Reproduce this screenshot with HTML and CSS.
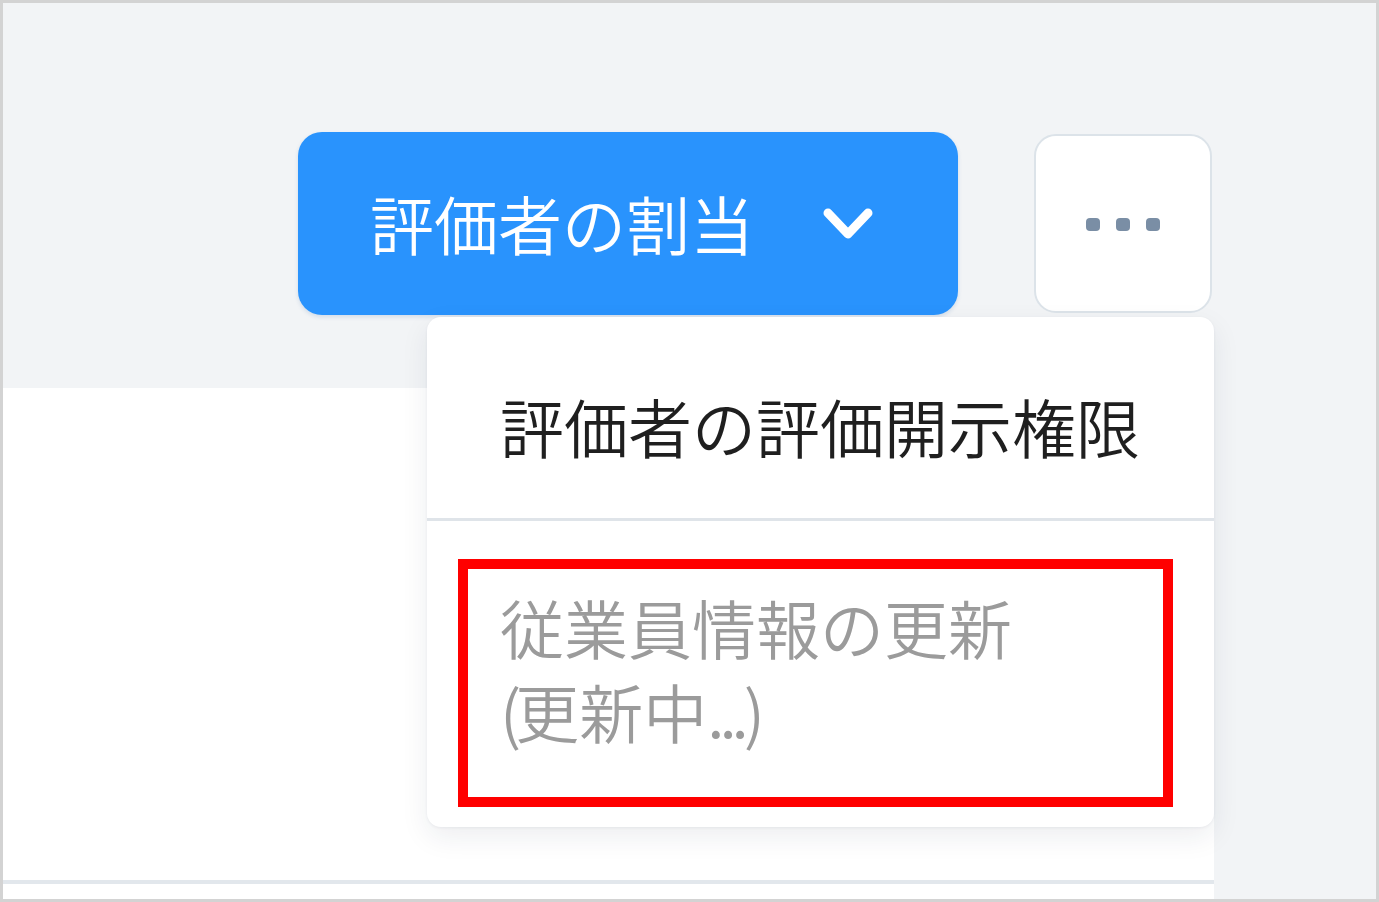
FILE: index.html
```html
<!DOCTYPE html>
<html lang="ja">
<head>
    <meta charset="UTF-8">
    <meta name="viewport" content="width=device-width, initial-scale=1.0">
    <title>評価者の割当</title>
    <link rel="stylesheet" href="styles.css">
</head>
<body>

    <div class="frame">
        <div class="page">
            <div class="toolbar">
                <div class="actions">
                    <button class="assign-btn">
                        <span>評価者の割当</span>
                        <svg class="chevron" width="52" height="32" viewBox="0 0 52 32">
                            <polyline points="6,6 26,27 46,6" fill="none" stroke="#fff" stroke-width="9" stroke-linecap="round" stroke-linejoin="round"/>
                        </svg>
                    </button>
                    <button class="more-btn">
                        <span class="dot"></span>
                        <span class="dot"></span>
                        <span class="dot"></span>
                    </button>

                    <div class="dropdown">
                        <div class="menu-item">評価者の評価開示権限</div>
                        <div class="menu-item disabled">
                            <div class="highlight">従業員情報の更新<br><span class="paren">(</span>更新中<span class="ellipsis">...)</span></div>
                        </div>
                    </div>
                </div>
            </div>

            <div class="panel">
                <div class="panel-body"></div>
                <div class="panel-footer"></div>
            </div>
        </div>
        <div class="side"></div>
    </div>

</body>
</html>
```

FILE: styles.css
```css
* {
    box-sizing: border-box;
}

body {
    margin: 0;
    font-family: "Noto Sans CJK JP", "Noto Sans", sans-serif;
}

.frame {
    width: 1379px;
    height: 902px;
    border: 3px solid #d3d3d3;
    background: #f2f4f6;
    display: flex;
}

.page {
    width: 1211px;
    display: flex;
    flex-direction: column;
}

.side {
    flex: 1;
}

.toolbar {
    height: 385px;
    padding-top: 129px;
    display: flex;
    justify-content: flex-end;
    padding-right: 2px;
}

.actions {
    position: relative;
    display: flex;
    align-items: flex-start;
    gap: 76px;
    height: 183px;
}

.assign-btn {
    height: 183px;
    padding: 0 84px 0 72px;
    border: none;
    border-radius: 24px;
    background: #2993fd;
    color: white;
    font-family: inherit;
    font-size: 64px;
    font-weight: 350;
    display: flex;
    align-items: center;
    gap: 68px;
    box-shadow: 0 2px 4px rgba(30, 90, 160, 0.15);
    cursor: pointer;
}

.assign-btn span {
    line-height: 1;
    margin-top: -3px;
}

.chevron {
    display: block;
    margin-top: -2px;
}

.more-btn {
    width: 178px;
    height: 179px;
    margin-top: 2px;
    background: white;
    border: 2px solid #dce3e9;
    border-radius: 22px;
    display: flex;
    justify-content: center;
    align-items: center;
    gap: 16px;
    padding: 2px 0 0;
    cursor: pointer;
}

.dot {
    width: 14px;
    height: 13px;
    border-radius: 4px;
    background: #7a8ea5;
}

.dropdown {
    position: absolute;
    top: 185px;
    right: -2px;
    width: 787px;
    background: white;
    border-radius: 14px;
    box-shadow: 0 10px 28px rgba(20, 40, 70, 0.08), 0 1px 3px rgba(20, 40, 70, 0.06);
    z-index: 2;
}

.menu-item {
    font-size: 64px;
    font-weight: 350;
    line-height: 84px;
    color: #1f1f1f;
    padding: 66px 20px 51px 73px;
    border-bottom: 3px solid #dfe4e9;
    white-space: nowrap;
}

.menu-item.disabled {
    color: #9b9b9b;
    border-bottom: none;
    padding: 38px 41px 20px 31px;
}

.highlight {
    border: 10px solid #ff0000;
    padding: 15px 0 45px 32px;
}

.paren {
    letter-spacing: -6px;
}

.ellipsis {
    letter-spacing: -5px;
}

.panel {
    flex: 1;
    background: white;
    display: flex;
    flex-direction: column;
}

.panel-body {
    flex: 1;
}

.panel-footer {
    height: 19px;
    border-top: 4px solid #e2e7ec;
}
```
